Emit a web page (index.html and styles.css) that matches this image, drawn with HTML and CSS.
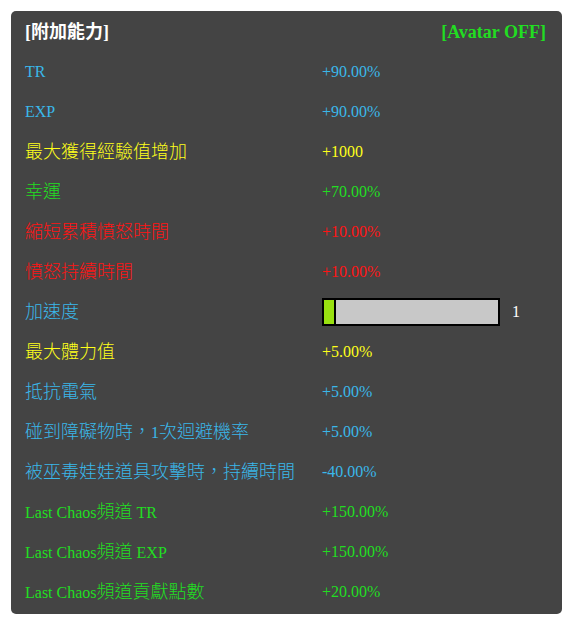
FILE: index.html
```html
<!DOCTYPE html>
<html lang="zh-Hant">
<head>
<meta charset="utf-8">
<title>附加能力</title>
<link rel="stylesheet" href="styles.css">
</head>
<body>
<div class="panel">
  <div class="head">
    <span class="title">[<span class="zh">附加能力</span>]</span>
    <span class="avatar">[Avatar OFF]</span>
  </div>
  <div class="row blue"><span class="lbl">TR</span><span class="val">+90.00%</span></div>
  <div class="row blue"><span class="lbl">EXP</span><span class="val">+90.00%</span></div>
  <div class="row yellow"><span class="lbl"><span class="zh">最大獲得經驗值增加</span></span><span class="val">+1000</span></div>
  <div class="row green"><span class="lbl"><span class="zh">幸運</span></span><span class="val">+70.00%</span></div>
  <div class="row red"><span class="lbl"><span class="zh">縮短累積憤怒時間</span></span><span class="val">+10.00%</span></div>
  <div class="row red"><span class="lbl"><span class="zh">憤怒持續時間</span></span><span class="val">+10.00%</span></div>
  <div class="row blue"><span class="lbl"><span class="zh">加速度</span></span>
    <span class="val barwrap"><span class="bar"><span class="fill" style="width:10px"></span></span><span class="barnum">1</span></span>
  </div>
  <div class="row yellow"><span class="lbl"><span class="zh">最大體力值</span></span><span class="val">+5.00%</span></div>
  <div class="row blue"><span class="lbl"><span class="zh">抵抗電氣</span></span><span class="val">+5.00%</span></div>
  <div class="row blue"><span class="lbl"><span class="zh">碰到障礙物時，</span>1<span class="zh">次迴避機率</span></span><span class="val">+5.00%</span></div>
  <div class="row blue"><span class="lbl"><span class="zh">被巫毒娃娃道具攻擊時，持續時間</span></span><span class="val">-40.00%</span></div>
  <div class="row green"><span class="lbl">Last Chaos<span class="zh">頻道</span> TR</span><span class="val">+150.00%</span></div>
  <div class="row green"><span class="lbl">Last Chaos<span class="zh">頻道</span> EXP</span><span class="val">+150.00%</span></div>
  <div class="row green"><span class="lbl">Last Chaos<span class="zh">頻道貢獻點數</span></span><span class="val">+20.00%</span></div>
</div>
</body>
</html>
```
FILE: styles.css
```css
html, body {
  margin: 0;
  padding: 0;
  background: #ffffff;
}
body {
  padding: 11px;
  font-family: "Liberation Serif", "Noto Sans CJK TC", serif;
  font-size: 16px;
}
.panel {
  width: 551px;
  height: 603px;
  box-sizing: border-box;
  background: #444444;
  border-radius: 5px;
  padding: 1px 16px 0 14px;
}
.zh {
  font-family: "Noto Sans CJK TC", sans-serif;
  font-size: 18px;
  font-weight: 300;
  line-height: 1;
}
.head {
  height: 40px;
  display: flex;
  align-items: center;
  justify-content: space-between;
  font-weight: bold;
  font-size: 18px;
}
.title {
  color: #ffffff;
}
.title .zh {
  font-weight: bold;
}
.avatar {
  color: #22dd22;
}
.row {
  height: 40px;
  display: grid;
  grid-template-columns: 297px 1fr;
  align-items: center;
  white-space: nowrap;
}
.lbl {
  display: block;
  line-height: 20px;
}
.val {
  display: flex;
  align-items: center;
}
.blue { color: #3ab8ea; }
.yellow { color: #ffff1a; }
.green { color: #22de22; }
.red { color: #ff1414; }
.barwrap {
  gap: 12px;
}
.bar {
  width: 178px;
  height: 28px;
  box-sizing: border-box;
  border: 2px solid #000000;
  background: #c8c8c8;
  display: flex;
}
.fill {
  height: 100%;
  background: #99e010;
  border-right: 2px solid #000000;
}
.barnum {
  color: #ffffff;
}
```
